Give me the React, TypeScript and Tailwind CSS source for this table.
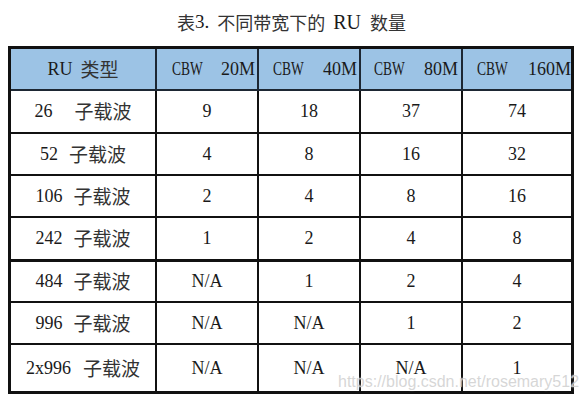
import React from "react";

const rows: { ru: string; gap: string; vals: string[]; h: string; b: string }[] = [
  { ru: "26", gap: "ml-[22px]", vals: ["9", "18", "37", "74"], h: "h-[43px]", b: "border-b-2" },
  { ru: "52", gap: "ml-[11px]", vals: ["4", "8", "16", "32"], h: "h-[42px]", b: "border-b-2" },
  { ru: "106", gap: "ml-[11px]", vals: ["2", "4", "8", "16"], h: "h-[42px]", b: "border-b-2" },
  { ru: "242", gap: "ml-[11px]", vals: ["1", "2", "4", "8"], h: "h-[44px]", b: "border-b-[3px]" },
  { ru: "484", gap: "ml-[11px]", vals: ["N/A", "1", "2", "4"], h: "h-[41px]", b: "border-b-2" },
  { ru: "996", gap: "ml-[11px]", vals: ["N/A", "N/A", "1", "2"], h: "h-[42px]", b: "border-b-2" },
  { ru: "2x996", gap: "ml-[12px]", vals: ["N/A", "N/A", "N/A", "1"], h: "h-[46px]", b: "" },
];

const colW = ["w-[102px]", "w-[102px]", "w-[102px]", "w-[108px]"];
const headPad = [
  "pl-[15px] pr-[2px]",
  "pl-[14px] pr-[2px]",
  "pl-[13px] pr-[3px]",
  "pl-[14px] pr-0",
];
const bw = ["20M", "40M", "80M", "160M"];

const cjk = "font-['Noto_Sans_CJK_SC',sans-serif] text-[19px] text-[#333]";
const titleCjk = "font-['Noto_Sans_CJK_SC',sans-serif] text-[18px] text-[#333]";

export default function App() {
  return (
    <div className="relative w-[585px] h-[401px] overflow-hidden bg-white font-['Liberation_Serif','Noto_Sans_CJK_SC',serif] text-[18px] text-[#1a1a1a]">
      <div className="h-[46px] flex items-center justify-center pb-[2px] pr-[2px]">
        <span className={titleCjk}>表</span>
        <span className="text-[19px]">3.</span>
        <span className={"ml-[8px] " + titleCjk}>不同带宽下的</span>
        <span className="ml-[8px] text-[20px]">RU</span>
        <span className={"ml-[9px] " + titleCjk}>数量</span>
      </div>

      <div className="ml-[8px] w-[566px] border-[3px] border-[#111] flex flex-col">
        <div className="flex h-[42px] bg-[#9cc3e5] border-b-2 border-[#1d2733]">
          <div className="w-[146px] border-r-2 border-[#1d2733] flex items-center justify-center">
            <span>RU</span>
            <span className={"ml-[8px] " + cjk}>类型</span>
          </div>
          {bw.map((b, i) => (
            <div
              key={b}
              className={
                colW[i] +
                " " +
                headPad[i] +
                " flex items-center justify-between " +
                (i < 3 ? "border-r-2 border-[#1d2733]" : "")
              }
            >
              <span className="inline-block origin-left scale-x-75">CBW</span>
              <span>{b}</span>
            </div>
          ))}
        </div>

        {rows.map((r) => (
          <div key={r.ru} className={"flex border-[#111] " + r.h + " " + r.b}>
            <div className="w-[146px] border-r-2 border-[#111] flex items-center justify-center">
              <span>{r.ru}</span>
              <span className={r.gap + " " + cjk}>子载波</span>
            </div>
            {r.vals.map((v, i) => (
              <div
                key={i}
                className={
                  colW[i] +
                  " flex items-center justify-center " +
                  (i < 3 ? "border-r-2 border-[#111]" : "")
                }
              >
                {v}
              </div>
            ))}
          </div>
        ))}
      </div>

      <div className="absolute left-[338px] top-[372px] font-['Liberation_Sans',sans-serif] text-[16px] leading-[20px] text-[#c9c9c9]/75 whitespace-nowrap [text-shadow:0_0_2px_#fff]">
        https://blog.csdn.net/rosemary512
      </div>
    </div>
  );
}
